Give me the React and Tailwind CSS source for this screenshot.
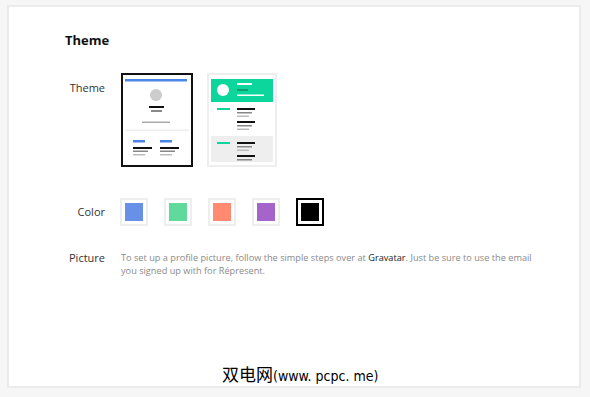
import React from 'react';

const swatches = [
  { id: 'blue', color: 'bg-[#6790e6]' },
  { id: 'green', color: 'bg-[#5fd99c]' },
  { id: 'salmon', color: 'bg-[#ff8a70]' },
  { id: 'purple', color: 'bg-[#a564c9]' },
  { id: 'black', color: 'bg-black', selected: true },
];

const ClassicThumb = () => (
  <svg width="68" height="90" viewBox="0 0 68 90">
    <rect x="2" y="4" width="62" height="2.5" fill="#4a86e8" />
    <circle cx="33" cy="20" r="6" fill="#cccccc" />
    <rect x="26" y="31" width="15" height="2" fill="#111" />
    <rect x="28" y="35" width="11" height="2" fill="#888" />
    <rect x="19" y="46.5" width="28" height="1.5" fill="#aaa" />
    <rect x="2" y="54.5" width="64" height="1.5" fill="#eee" />
    <rect x="10" y="65" width="12" height="2.5" fill="#4a86e8" />
    <rect x="37" y="65" width="12" height="2.5" fill="#4a86e8" />
    <rect x="10" y="72" width="19" height="2" fill="#111" />
    <rect x="37" y="72" width="19" height="2" fill="#111" />
    <rect x="10" y="75.5" width="15" height="1.5" fill="#888" />
    <rect x="37" y="75.5" width="15" height="1.5" fill="#888" />
    <rect x="10" y="79" width="12" height="1.5" fill="#bbb" />
    <rect x="37" y="79" width="12" height="1.5" fill="#bbb" />
  </svg>
);

const ModernThumb = () => (
  <svg width="66" height="90" viewBox="0 0 66 90">
    <rect x="2" y="4" width="62" height="23" fill="#0cd69b" />
    <circle cx="14" cy="15" r="6" fill="#fff" />
    <rect x="28" y="8" width="15" height="2" fill="#fff" />
    <rect x="28" y="14" width="11" height="2" fill="#0a9f70" />
    <rect x="28" y="19.5" width="27" height="1.5" fill="#fff" />
    <rect x="8" y="33" width="13" height="2" fill="#0cd69b" />
    <rect x="28" y="33" width="18" height="2" fill="#111" />
    <rect x="28" y="37" width="15" height="1.5" fill="#888" />
    <rect x="28" y="40.5" width="12" height="1.5" fill="#bbb" />
    <rect x="28" y="46" width="18" height="2" fill="#111" />
    <rect x="28" y="50" width="15" height="1.5" fill="#888" />
    <rect x="28" y="53.5" width="12" height="1.5" fill="#bbb" />
    <rect x="2" y="61" width="62" height="26" fill="#eeeeee" />
    <rect x="8" y="67" width="13" height="2" fill="#0cd69b" />
    <rect x="28" y="67" width="18" height="2" fill="#111" />
    <rect x="28" y="71" width="15" height="1.5" fill="#888" />
    <rect x="28" y="74.5" width="12" height="1.5" fill="#bbb" />
    <rect x="28" y="80" width="18" height="2" fill="#111" />
    <rect x="28" y="84" width="15" height="1.5" fill="#888" />
  </svg>
);

const Row = ({ label, labelClass = '', children, className = '' }) => (
  <div className={`flex ${className}`}>
    <div className={`w-[40px] shrink-0 text-right text-[11px] text-[#333] whitespace-nowrap ${labelClass}`}>{label}</div>
    <div className="ml-[16px]">{children}</div>
  </div>
);

export default function App() {
  return (
    <div className="w-[590px] h-[397px] bg-[#f6f6f6] pt-[5px] pl-[7px] font-['Open_Sans',sans-serif]">
      <div className="relative w-[574px] h-[383px] bg-white border-2 border-[#ebebeb] pl-[56px] pt-[24px]">
        {/* Encabezado */}
        <h1 className="text-[13px] font-bold text-[#111] leading-[18px]">Theme</h1>

        <div className="mt-[24px]">
          <Row label="Theme" labelClass="pt-[7px]">
            <div className="flex gap-[14px]">
              <div className="w-[72px] h-[94px] border-2 border-[#111]">
                <ClassicThumb />
              </div>
              <div className="w-[70px] h-[94px] border-2 border-[#eeeeee]">
                <ModernThumb />
              </div>
            </div>
          </Row>

          <Row label="Color" labelClass="self-center" className="mt-[31px]">
            <div className="flex gap-[16px] -ml-[1px]">
              {swatches.map((s) => (
                <div
                  key={s.id}
                  className={`w-[28px] h-[28px] p-[3px] border-2 ${s.selected ? 'border-black' : 'border-[#eeeeee]'}`}
                >
                  <div className={`w-full h-full ${s.color}`} />
                </div>
              ))}
            </div>
          </Row>

          <Row label="Picture" labelClass="-mt-[1px]" className="mt-[25px]">
            <p className="w-[420px] text-[9.2px] leading-[13px] text-[#8a8a8a]">
              To set up a profile picture, follow the simple steps over at{' '}
              <span className="text-[#222]">Gravatar</span>. Just be sure to use the email you signed up with for Répresent.
            </p>
          </Row>
        </div>

        {/* Marca de agua */}
        <div className="absolute left-[213px] top-[357px] flex items-baseline text-black leading-[20px]">
          <span className="text-[17px] font-['Noto_Sans_CJK_SC',sans-serif]">双电网</span>
          <span className="text-[14px] font-['DejaVu_Sans_Condensed','Liberation_Sans',sans-serif]">(www. pcpc. me)</span>
        </div>
      </div>
    </div>
  );
}
